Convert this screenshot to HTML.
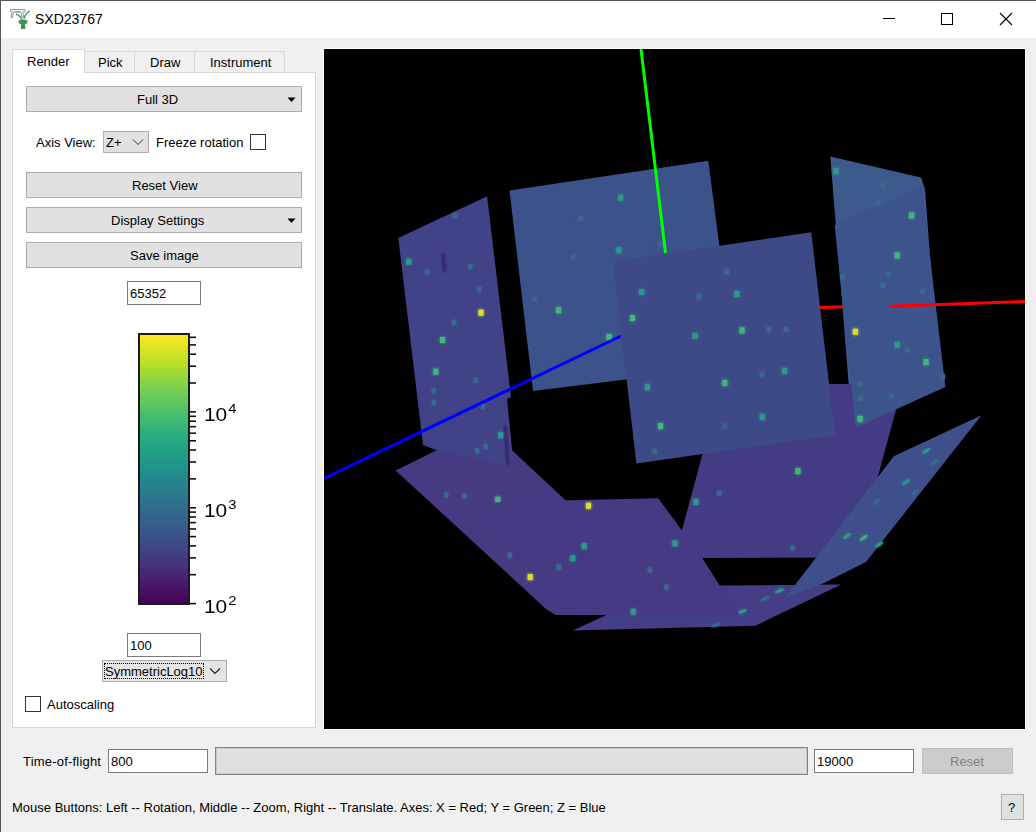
<!DOCTYPE html>
<html><head><meta charset="utf-8">
<style>
*{box-sizing:border-box;margin:0;padding:0}
html,body{width:1036px;height:832px;overflow:hidden;background:#f0f0f0}
body{position:relative;font-family:"Liberation Sans",sans-serif;font-size:13px;color:#000}
.a{position:absolute}
.t{position:absolute;white-space:pre;line-height:1}
.btn{position:absolute;background:#e1e1e1;border:1px solid #adadad}
.inp{position:absolute;background:#fff;border:1px solid #7a7a7a}
.cb{position:absolute;background:#fff;border:1px solid #333;width:16px;height:16px}
</style></head><body>
<!-- window frame -->
<div class="a" style="left:0;top:0;width:1036px;height:38px;background:#fff"></div>
<div class="a" style="left:0;top:0;width:1036px;height:1px;background:#585858"></div>
<div class="a" style="left:0;top:0;width:1px;height:832px;background:#585858"></div>
<!-- icon -->
<svg class="a" style="left:0;top:0" width="34" height="36" viewBox="0 0 34 36">
<path d="M10.5 9.5h14.5v2.3h-2.2l0.8 5.5h-1.6l-1.2-5.3h-7.2l-1.3 5.6h-1.4l1.2-5.8h-1.6z" fill="#fff" stroke="#8c8c8c" stroke-width="0.9"/>
<rect x="15" y="11" width="5" height="1.6" fill="#9a9a9a"/>
<path d="M16 14.2c2.5 0.6 4.5 2.5 6 5.5M29.8 11.2c-2.8 1.2-4.8 3.8-5.8 7.6" fill="none" stroke="#3e9150" stroke-width="1.3"/>
<ellipse cx="23" cy="22" rx="4.6" ry="2.4" fill="#3e9150"/>
<path d="M21.3 22h3.6l0.4 7h-4.4z" fill="#3e9150"/>
<path d="M19.5 21.5h2M24.5 22h2" stroke="#7fb88a" stroke-width="0.6"/>
</svg>
<div class="t" style="left:35px;top:12px;font-size:14px">SXD23767</div>
<!-- title buttons -->
<div class="a" style="left:883px;top:18px;width:12px;height:1px;background:#000"></div>
<div class="a" style="left:941px;top:13px;width:12px;height:12px;border:1px solid #000"></div>
<svg class="a" style="left:999px;top:12px" width="14" height="14" viewBox="0 0 14 14"><path d="M1 1L13 13M13 1L1 13" stroke="#000" stroke-width="1.1"/></svg>

<!-- tabs -->
<div class="a" style="left:12px;top:72px;width:304px;height:656px;background:#fff;border:1px solid #d9d9d9"></div>
<div class="a" style="left:84px;top:51px;width:51px;height:22px;background:#f0f0f0;border:1px solid #d9d9d9"></div>
<div class="a" style="left:134px;top:51px;width:61px;height:22px;background:#f0f0f0;border:1px solid #d9d9d9"></div>
<div class="a" style="left:194px;top:51px;width:91px;height:22px;background:#f0f0f0;border:1px solid #d9d9d9"></div>
<div class="a" style="left:12px;top:49px;width:73px;height:24px;background:#fff;border:1px solid #d9d9d9;border-bottom:none"></div>
<div class="t" style="left:27px;top:55px">Render</div>
<div class="t" style="left:98px;top:56px">Pick</div>
<div class="t" style="left:150px;top:56px">Draw</div>
<div class="t" style="left:210px;top:56px">Instrument</div>

<!-- Full 3D -->
<div class="btn" style="left:26px;top:86px;width:276px;height:26px"></div>
<div class="t" style="left:137px;top:93px">Full 3D</div>
<svg class="a" style="left:287px;top:97px" width="9" height="6"><path d="M0.5 0.5h8l-4 4.5z" fill="#000"/></svg>

<!-- axis view -->
<div class="t" style="left:36px;top:136px">Axis View:</div>
<div class="btn" style="left:103px;top:131px;width:46px;height:22px"></div>
<div class="t" style="left:106px;top:136px">Z+</div>
<svg class="a" style="left:132px;top:138px" width="12" height="8"><path d="M1 1.5l5 5 5-5" fill="none" stroke="#333" stroke-width="1"/></svg>
<div class="t" style="left:156px;top:136px">Freeze rotation</div>
<div class="cb" style="left:250px;top:134px"></div>

<div class="btn" style="left:26px;top:172px;width:276px;height:26px"></div>
<div class="t" style="left:132px;top:179px">Reset View</div>
<div class="btn" style="left:26px;top:207px;width:276px;height:26px"></div>
<div class="t" style="left:111px;top:214px">Display Settings</div>
<svg class="a" style="left:287px;top:218px" width="9" height="6"><path d="M0.5 0.5h8l-4 4.5z" fill="#000"/></svg>
<div class="btn" style="left:26px;top:242px;width:276px;height:26px"></div>
<div class="t" style="left:130px;top:249px">Save image</div>

<div class="inp" style="left:127px;top:281px;width:74px;height:24px"></div>
<div class="t" style="left:130px;top:287px">65352</div>

<!-- colorbar -->
<div id="cbar" class="a" style="left:138px;top:333px;width:52px;height:272px;border:2px solid #1a1a1a;background:linear-gradient(to top,#440154 0%,#482475 10%,#414487 20%,#355f8d 30%,#2a788e 40%,#21918c 50%,#22a884 60%,#44bf70 70%,#7ad151 80%,#bddf26 90%,#fde725 100%)"></div>
<svg class="a" style="left:0;top:0" width="240" height="640" viewBox="0 0 240 640" id="ticks"><line x1="189" y1="603.6" x2="196" y2="603.6" stroke="#111" stroke-width="1.6"/><line x1="189" y1="574.7" x2="196" y2="574.7" stroke="#111" stroke-width="1.6"/><line x1="189" y1="557.9" x2="196" y2="557.9" stroke="#111" stroke-width="1.6"/><line x1="189" y1="545.9" x2="196" y2="545.9" stroke="#111" stroke-width="1.6"/><line x1="189" y1="536.6" x2="196" y2="536.6" stroke="#111" stroke-width="1.6"/><line x1="189" y1="529.0" x2="196" y2="529.0" stroke="#111" stroke-width="1.6"/><line x1="189" y1="522.6" x2="196" y2="522.6" stroke="#111" stroke-width="1.6"/><line x1="189" y1="517.0" x2="196" y2="517.0" stroke="#111" stroke-width="1.6"/><line x1="189" y1="512.1" x2="196" y2="512.1" stroke="#111" stroke-width="1.6"/><line x1="189" y1="507.8" x2="196" y2="507.8" stroke="#111" stroke-width="1.6"/><line x1="189" y1="478.9" x2="196" y2="478.9" stroke="#111" stroke-width="1.6"/><line x1="189" y1="462.0" x2="196" y2="462.0" stroke="#111" stroke-width="1.6"/><line x1="189" y1="450.0" x2="196" y2="450.0" stroke="#111" stroke-width="1.6"/><line x1="189" y1="440.8" x2="196" y2="440.8" stroke="#111" stroke-width="1.6"/><line x1="189" y1="433.2" x2="196" y2="433.2" stroke="#111" stroke-width="1.6"/><line x1="189" y1="426.7" x2="196" y2="426.7" stroke="#111" stroke-width="1.6"/><line x1="189" y1="421.2" x2="196" y2="421.2" stroke="#111" stroke-width="1.6"/><line x1="189" y1="416.3" x2="196" y2="416.3" stroke="#111" stroke-width="1.6"/><line x1="189" y1="411.9" x2="196" y2="411.9" stroke="#111" stroke-width="1.6"/><line x1="189" y1="383.0" x2="196" y2="383.0" stroke="#111" stroke-width="1.6"/><line x1="189" y1="366.2" x2="196" y2="366.2" stroke="#111" stroke-width="1.6"/><line x1="189" y1="354.2" x2="196" y2="354.2" stroke="#111" stroke-width="1.6"/><line x1="189" y1="344.9" x2="196" y2="344.9" stroke="#111" stroke-width="1.6"/><line x1="189" y1="337.3" x2="196" y2="337.3" stroke="#111" stroke-width="1.6"/></svg>
<div class="t" style="left:204px;top:402px;font-size:19px;transform:scaleX(1.1);transform-origin:0 0">10<span style="font-size:13.5px;vertical-align:8px;margin-left:1px">4</span></div>
<div class="t" style="left:204px;top:498px;font-size:19px;transform:scaleX(1.1);transform-origin:0 0">10<span style="font-size:13.5px;vertical-align:8px;margin-left:1px">3</span></div>
<div class="t" style="left:204px;top:594px;font-size:19px;transform:scaleX(1.1);transform-origin:0 0">10<span style="font-size:13.5px;vertical-align:8px;margin-left:1px">2</span></div>

<div class="inp" style="left:127px;top:633px;width:74px;height:24px"></div>
<div class="t" style="left:130px;top:639px">100</div>
<div class="btn" style="left:102px;top:660px;width:125px;height:22px;background:#e5e5e5"></div>
<div class="a" style="left:104px;top:663px;width:100px;height:16px;border:1px dotted #000"></div>
<div class="t" style="left:105px;top:665px">SymmetricLog10</div>
<svg class="a" style="left:209px;top:667px" width="12" height="8"><path d="M1 1.5l5 5 5-5" fill="none" stroke="#222" stroke-width="1.2"/></svg>

<div class="cb" style="left:25px;top:696px"></div>
<div class="t" style="left:47px;top:698px">Autoscaling</div>

<!-- 3D view -->
<div class="a" style="left:323px;top:48px;width:703px;height:682px;background:#fff"></div>
<svg class="a" id="scene" style="left:324px;top:49px;background:#000" width="701" height="680" viewBox="324 49 701 680">
<defs><filter id="glow" x="-50%" y="-50%" width="200%" height="200%"><feGaussianBlur stdDeviation="1.4" result="b"/><feMerge><feMergeNode in="b"/><feMergeNode in="SourceGraphic"/></feMerge></filter><filter id="bl"><feGaussianBlur stdDeviation="0.8"/></filter></defs>
<polygon points="509.5,190.5 708.3,160.8 735.0,366.0 533.0,391.0" fill="#3c528a"/>
<polygon points="830.3,156.4 921.1,177.5 925.0,189.0 940.0,390.0 850.0,400.0" fill="#3d5a8d"/>
<g filter="url(#glow)"><rect x="618.1" y="194.7" width="5" height="6" fill="#2c9a8a"/><rect x="578.8" y="216.0" width="4" height="5" fill="#386a8d"/><rect x="616.3" y="247.2" width="5" height="6" fill="#2c9a8a"/><rect x="571.5" y="254.3" width="4" height="5" fill="#386a8d"/><rect x="532.6" y="296.1" width="4" height="5" fill="#386a8d"/><rect x="556.1" y="307.2" width="5" height="6" fill="#42b77a"/><rect x="606.5" y="334.0" width="5" height="6" fill="#42b77a"/><rect x="658.7" y="241.9" width="4" height="5" fill="#386a8d"/></g>
<g filter="url(#glow)"><rect x="833.5" y="168.2" width="5" height="6" fill="#2c9a8a"/><rect x="880.8" y="182.2" width="4" height="5" fill="#386a8d"/><rect x="875.9" y="200.4" width="4" height="5" fill="#386a8d"/></g>
<polyline points="641.0,49.0 665.5,253.0" fill="none" stroke="#00ff00" stroke-width="3"/>
<polygon points="395.6,470.4 486.0,426.0 636.0,566.0 546.0,609.0" fill="#463a83"/>
<polygon points="398.3,238.1 487.1,196.3 511.0,397.0 507.0,399.0 512.7,456.0 509.0,466.0 436.0,450.0 423.0,445.0" fill="#414288"/>
<g filter="url(#glow)"><rect x="444.1" y="492.4" width="4" height="5" fill="#386a8d"/><rect x="462.6" y="493.6" width="4" height="5" fill="#386a8d"/><rect x="495.3" y="496.7" width="5" height="6" fill="#42b77a"/><rect x="503.0" y="510.4" width="4" height="5" fill="#386a8d"/></g>
<g filter="url(#glow)"><rect x="406.3" y="258.7" width="5" height="6" fill="#2c9a8a"/><rect x="425.1" y="269.4" width="4" height="5" fill="#386a8d"/><rect x="478.5" y="309.7" width="5" height="6" fill="#d9e02a"/><rect x="452.0" y="319.8" width="4" height="5" fill="#386a8d"/><rect x="477.0" y="286.7" width="4" height="5" fill="#386a8d"/><rect x="440.0" y="337.0" width="5" height="6" fill="#42b77a"/><rect x="453.0" y="213.1" width="4" height="5" fill="#386a8d"/><rect x="468.4" y="264.0" width="4" height="5" fill="#386a8d"/><rect x="433.3" y="368.7" width="5" height="6" fill="#42b77a"/><rect x="431.8" y="388.5" width="4" height="5" fill="#386a8d"/><rect x="431.8" y="400.0" width="4" height="5" fill="#386a8d"/><rect x="473.8" y="377.9" width="4" height="5" fill="#386a8d"/><rect x="480.9" y="403.8" width="4" height="5" fill="#386a8d"/><rect x="498.3" y="432.2" width="5" height="6" fill="#2c9a8a"/><rect x="475.1" y="448.1" width="4" height="5" fill="#386a8d"/><rect x="483.8" y="444.2" width="4" height="5" fill="#386a8d"/></g>
<g filter="url(#bl)" stroke="#2a1050" stroke-width="2.2" opacity="0.8"><path d="M443 253L444.5 272"/><path d="M505 425L508 465"/></g>
<polyline points="324.0,478.4 621.0,336.0" fill="none" stroke="#0000ff" stroke-width="3"/>
<polyline points="818.0,307.4 845.0,306.8" fill="none" stroke="#ff0000" stroke-width="3"/>
<polygon points="572.7,630.4 670.0,586.0 841.3,584.5 755.6,625.7" fill="#433e86"/>
<g filter="url(#glow)"><ellipse cx="779.5" cy="590.7" rx="4.5" ry="1.4" transform="rotate(-22 779.5 590.7)" fill="#2c9a8a"/><ellipse cx="764.9" cy="598.7" rx="4.5" ry="1.4" transform="rotate(-22 764.9 598.7)" fill="#386a8d"/><ellipse cx="742.5" cy="611.4" rx="4.5" ry="1.4" transform="rotate(-22 742.5 611.4)" fill="#2c9a8a"/><ellipse cx="715.4" cy="625.0" rx="4.5" ry="1.4" transform="rotate(-22 715.4 625.0)" fill="#386a8d"/></g>
<polygon points="720.0,384.0 903.0,384.0 856.0,557.5 702.3,558.0 681.6,531.5 702.5,454.0" fill="#433b84"/>
<g filter="url(#glow)"><rect x="795.4" y="468.2" width="5" height="6" fill="#42b77a"/><rect x="693.5" y="499.0" width="5" height="6" fill="#2c9a8a"/><rect x="717.1" y="490.9" width="4" height="5" fill="#386a8d"/><rect x="790.7" y="545.7" width="4" height="5" fill="#386a8d"/></g>
<polygon points="474.0,503.0 559.7,500.6 658.2,498.2 702.3,558.0 720.0,586.0 740.0,615.0 555.5,615.1 546.0,609.0" fill="#453a83"/>
<g filter="url(#glow)"><rect x="586.0" y="502.8" width="5" height="6" fill="#d9e02a"/><rect x="581.7" y="543.1" width="5" height="6" fill="#2c9a8a"/><rect x="570.2" y="555.3" width="5" height="6" fill="#2c9a8a"/><rect x="556.3" y="564.4" width="4" height="5" fill="#386a8d"/><rect x="648.0" y="567.3" width="4" height="5" fill="#386a8d"/><rect x="664.4" y="584.6" width="4" height="5" fill="#386a8d"/><rect x="672.5" y="540.3" width="5" height="6" fill="#2c9a8a"/><rect x="630.7" y="608.6" width="5" height="6" fill="#2c9a8a"/><rect x="527.7" y="574.1" width="5" height="6" fill="#d9e02a"/><rect x="507.8" y="552.5" width="4" height="5" fill="#386a8d"/><rect x="557.1" y="564.5" width="4" height="5" fill="#386a8d"/></g>
<polygon points="834.6,225.0 921.7,186.0 945.4,386.9 896.2,409.3 855.6,427.8" fill="#3c538b"/>
<g filter="url(#glow)"><rect x="909.1" y="212.6" width="5" height="6" fill="#42b77a"/><rect x="894.7" y="252.4" width="5" height="6" fill="#42b77a"/><rect x="886.5" y="271.6" width="4" height="5" fill="#386a8d"/><rect x="880.8" y="283.2" width="4" height="5" fill="#386a8d"/><rect x="840.4" y="274.5" width="4" height="5" fill="#386a8d"/><rect x="852.9" y="328.8" width="5" height="6" fill="#d9e02a"/><rect x="894.7" y="341.8" width="5" height="6" fill="#2c9a8a"/><rect x="905.3" y="347.5" width="4" height="5" fill="#386a8d"/><rect x="923.5" y="359.1" width="5" height="6" fill="#42b77a"/><rect x="920.3" y="288.9" width="4" height="5" fill="#386a8d"/><rect x="941.0" y="374.3" width="4" height="5" fill="#386a8d"/><rect x="857.6" y="415.9" width="5" height="6" fill="#42b77a"/><rect x="858.0" y="381.5" width="4" height="5" fill="#386a8d"/><rect x="858.6" y="396.0" width="4" height="5" fill="#386a8d"/><rect x="889.3" y="393.5" width="4" height="5" fill="#386a8d"/></g>
<polygon points="612.9,261.4 811.3,232.3 835.0,435.0 636.4,463.6" fill="#3e4a87"/>
<g filter="url(#glow)"><rect x="639.2" y="289.0" width="5" height="6" fill="#2c9a8a"/><rect x="696.8" y="294.4" width="4" height="5" fill="#386a8d"/><rect x="734.4" y="291.0" width="5" height="6" fill="#2c9a8a"/><rect x="724.8" y="269.3" width="4" height="5" fill="#386a8d"/><rect x="630.0" y="315.0" width="5" height="6" fill="#42b77a"/><rect x="692.6" y="332.9" width="5" height="6" fill="#2c9a8a"/><rect x="739.6" y="327.4" width="5" height="6" fill="#42b77a"/><rect x="766.6" y="327.0" width="4" height="5" fill="#386a8d"/><rect x="784.0" y="327.0" width="4" height="5" fill="#386a8d"/><rect x="645.0" y="384.2" width="5" height="6" fill="#2c9a8a"/><rect x="722.3" y="379.9" width="5" height="6" fill="#42b77a"/><rect x="760.0" y="371.7" width="4" height="5" fill="#386a8d"/><rect x="782.0" y="367.8" width="5" height="6" fill="#2c9a8a"/><rect x="658.0" y="423.1" width="5" height="6" fill="#42b77a"/><rect x="722.8" y="423.6" width="4" height="5" fill="#386a8d"/><rect x="759.8" y="413.9" width="5" height="6" fill="#2c9a8a"/><rect x="652.7" y="449.0" width="4" height="5" fill="#386a8d"/></g>
<polygon points="981.5,415.3 893.8,456.2 785.0,598.0 822.0,584.0 866.0,562.0" fill="#3e4f8b"/>
<g filter="url(#glow)"><ellipse cx="926.2" cy="450.9" rx="4.5" ry="1.4" transform="rotate(-35 926.2 450.9)" fill="#2c9a8a"/><ellipse cx="934.6" cy="462.2" rx="4.5" ry="1.4" transform="rotate(-35 934.6 462.2)" fill="#386a8d"/><ellipse cx="905.8" cy="482.1" rx="4.5" ry="1.4" transform="rotate(-35 905.8 482.1)" fill="#2c9a8a"/><ellipse cx="915.4" cy="492.2" rx="4.5" ry="1.4" transform="rotate(-35 915.4 492.2)" fill="#386a8d"/><ellipse cx="876.4" cy="501.8" rx="4.5" ry="1.4" transform="rotate(-35 876.4 501.8)" fill="#386a8d"/><ellipse cx="846.9" cy="536.0" rx="4.5" ry="1.4" transform="rotate(-35 846.9 536.0)" fill="#2c9a8a"/><ellipse cx="863.7" cy="537.9" rx="4.5" ry="1.4" transform="rotate(-35 863.7 537.9)" fill="#42b77a"/><ellipse cx="879.3" cy="544.6" rx="4.5" ry="1.4" transform="rotate(-35 879.3 544.6)" fill="#2c9a8a"/></g>
<polyline points="890.0,306.2 1025.0,301.6" fill="none" stroke="#ff0000" stroke-width="3"/>
</svg>

<!-- bottom -->
<div class="t" style="left:23px;top:755px;letter-spacing:0.2px">Time-of-flight</div>
<div class="inp" style="left:108px;top:749px;width:100px;height:24px"></div>
<div class="t" style="left:111px;top:755px">800</div>
<div class="a" style="left:215px;top:747px;width:593px;height:28px;background:#e0e0e0;border:1px solid #7e8591;box-shadow:inset 0 0 0 1px #c9c9c9"></div>
<div class="inp" style="left:814px;top:749px;width:100px;height:24px"></div>
<div class="t" style="left:817px;top:755px">19000</div>
<div class="a" style="left:922px;top:748px;width:91px;height:26px;background:#cccccc;border:1px solid #bfbfbf"></div>
<div class="t" style="left:950px;top:755px;color:#838383">Reset</div>
<div class="t" style="left:12px;top:801px">Mouse Buttons: Left -- Rotation, Middle -- Zoom, Right -- Translate. Axes: X = Red; Y = Green; Z = Blue</div>
<div class="btn" style="left:1001px;top:794px;width:23px;height:26px"></div>
<div class="t" style="left:1008px;top:801px">?</div>
</body></html>
